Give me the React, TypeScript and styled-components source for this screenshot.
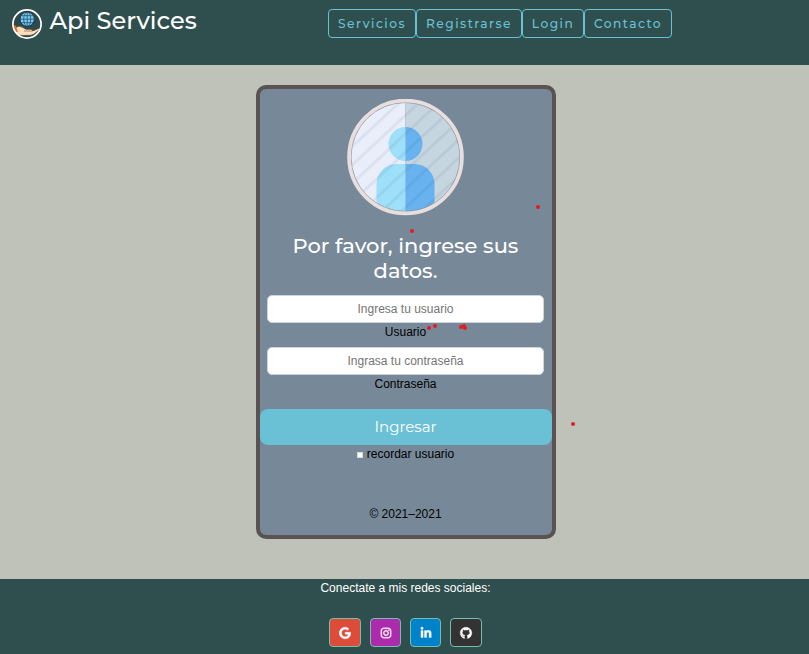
import React from 'react';
import styled, { createGlobalStyle } from 'styled-components';
import { FaGoogle, FaInstagram, FaLinkedinIn, FaGithub } from 'react-icons/fa';

const Global = createGlobalStyle`
  * { box-sizing: border-box; }
  body { margin: 0; background: #bfc2b8; font: 12px/18px "Liberation Sans", Arial, sans-serif; color: #000; }
`;
const display = '"Montserrat", "Inter", sans-serif';

const Page = styled.div`
  display: flex;
  flex-direction: column;
  height: 654px;
  overflow: hidden;
`;
const Header = styled.header`
  display: flex;
  align-items: flex-start;
  height: 65px;
  padding: 9px 0 0 12px;
  background: #2f4f4f;
`;
const Brand = styled.div`
  display: flex;
  width: 316px;
  gap: 7.5px;
`;
const BrandName = styled.span`
  font: 500 24px/24px ${display};
  color: #fff;
`;
const Nav = styled.nav`
  display: flex;
`;
const NavLink = styled.a<{ $width: number }>`
  display: flex;
  justify-content: center;
  width: ${(p) => p.$width}px;
  height: 29px;
  border: 1px solid #6ac1d5;
  border-radius: 4px;
  font: 500 12.2px/27px ${display};
  letter-spacing: 1.5px;
  color: #6ac1d5;
  white-space: nowrap;
`;
const Main = styled.main`
  display: flex;
  justify-content: center;
  align-items: flex-start;
  height: 514px;
  padding: 20px 0 0 3px;
`;
const Card = styled.form`
  position: relative;
  display: flex;
  flex-direction: column;
  align-items: center;
  width: 300px;
  height: 454px;
  padding: 10px 1px 0 0;
  border: 4px solid #5b5353;
  border-radius: 10px;
  background: #778899;
`;
const Title = styled.h1`
  width: 270px;
  margin: 17px 0 12px;
  font: 500 21px/25px ${display};
  text-align: center;
  color: #fff;
`;
const Field = styled.label`
  display: flex;
  flex-direction: column;
  align-items: center;
  height: 52px;
`;
const Input = styled.input`
  width: 277px;
  height: 28px;
  border: 1px solid #ced4da;
  border-radius: 5px;
  background: #fff;
  font: 12px "Liberation Sans", Arial, sans-serif;
  text-align: center;
  &::placeholder { color: #757575; }
`;
const Submit = styled.button`
  align-self: stretch;
  height: 36px;
  margin: 10px -1px 0 0;
  padding: 0 1px 0 0;
  border: 0;
  border-radius: 8px;
  background: #6ac1d5;
  font: 400 15px/36px ${display};
  color: #fff;
`;
const Remember = styled.label`
  display: flex;
  align-items: center;
  gap: 4px;
  height: 18px;
`;
const Check = styled.input`
  appearance: none;
  width: 6px;
  height: 6px;
  margin: 2px 0 0;
  border: 1px solid #d5d8db;
  background: #fff;
`;
const Copyright = styled.p`
  margin: 42px 0 0;
`;
const Dot = styled.i<{ $x: number; $y: number }>`
  position: absolute;
  left: ${(p) => p.$x - 262}px;
  top: ${(p) => p.$y - 91}px;
  width: 4px;
  height: 4px;
  border-radius: 2px;
  background: #e31b23;
`;
const Footer = styled.footer`
  display: flex;
  flex-direction: column;
  align-items: center;
  height: 75px;
  padding-left: 2px;
  background: #2f4f4f;
  color: #fff;
`;
const Socials = styled.div`
  display: flex;
  gap: 9px;
  margin-top: 21px;
`;
const Social = styled.a<{ $color: string; $width: number }>`
  display: flex;
  align-items: center;
  justify-content: center;
  width: ${(p) => p.$width}px;
  height: 29px;
  border: 1px solid #75bfaa;
  border-radius: 4px;
  background: ${(p) => p.$color};
  color: #fff;
  font-size: 12px;
  svg { stroke: #fff; stroke-width: 14px; overflow: visible; }
`;

const Logo = () => (
  <svg width="30" height="30" viewBox="0 0 30 30">
    <defs><clipPath id="logo"><circle cx="15" cy="15" r="14" /></clipPath></defs>
    <circle cx="15" cy="15" r="14" fill="#2f4a4c" />
    <g clipPath="url(#logo)">
      <circle cx="15.2" cy="10.2" r="7.2" fill="#78cbf3" stroke="#173447" />
      <g fill="none" stroke="#24536e" strokeWidth=".8">
        <ellipse cx="15.2" cy="10.2" rx="3.5" ry="7.2" />
        <path d="M15.2 3v14M8 10.2h14.4M9.2 6.7h12M9.2 13.7h12" />
      </g>
      <path d="M4 18q4-1.5 7 .5l3 1.8h5q2 .2 1.5 1.7l6.5-2.8 1 1-6 5q-3 1.7-8 1.2H7L3 23z" fill="#ffdfb6" stroke="#302c2a" strokeWidth=".6" />
      <path d="M12 22h8" stroke="#705344" strokeWidth=".6" />
      <path d="M0 16.5h3.8l2 6.5L2 24z" fill="#e86630" />
    </g>
    <circle cx="15" cy="15" r="14.1" fill="none" stroke="#fff" strokeWidth="1.7" />
  </svg>
);

const Avatar = () => (
  <svg width="117" height="117" viewBox="0.5 0 117 117">
    <defs>
      <clipPath id="avatar"><circle cx="59" cy="58" r="54.5" /></clipPath>
      <pattern id="stripes" width="13.5" height="13.5" patternUnits="userSpaceOnUse" patternTransform="rotate(47 59 58)">
        <rect width="3" height="13.5" fill="#34506a" opacity=".08" />
      </pattern>
    </defs>
    <g clipPath="url(#avatar)">
      <path d="M0 0h59v117H0z" fill="#e9eefa" />
      <path d="M59 0h59v117H59z" fill="#c5d6e1" />
      <path d="M59 28a17 17 0 0 0 0 34zM59 65H50a20 20 0 0 0-20 20v32h29z" fill="#9edff9" />
      <path d="M59 28a17 17 0 0 1 0 34zM59 65h9a20 20 0 0 1 20 20v32H59z" fill="#67b2ef" />
      <rect width="118" height="117" fill="url(#stripes)" />
    </g>
    <circle cx="59" cy="58" r="54.5" fill="none" stroke="#8a8f9a" strokeWidth=".8" />
    <circle cx="59" cy="58" r="56.4" fill="none" stroke="#e9dede" strokeWidth="3.8" />
  </svg>
);

const dots = [[538, 206.5], [411.5, 230.5], [428.5, 328], [434.5, 325.5], [460.5, 326.5], [463.5, 325.5], [465, 327.5], [572.5, 423.5]];

export default function App() {
  return (
    <Page>
      <Global />
      <Header>
        <Brand><Logo /><BrandName>Api Services</BrandName></Brand>
        <Nav>
          <NavLink $width={88}>Servicios</NavLink>
          <NavLink $width={106}>Registrarse</NavLink>
          <NavLink $width={62}>Login</NavLink>
          <NavLink $width={88}>Contacto</NavLink>
        </Nav>
      </Header>
      <Main>
        <Card>
          <Avatar />
          <Title>Por favor, ingrese sus datos.</Title>
          <Field><Input placeholder="Ingresa tu usuario" />Usuario</Field>
          <Field><Input type="password" placeholder="Ingrasa tu contraseña" />Contraseña</Field>
          <Submit type="button">Ingresar</Submit>
          <Remember><Check type="checkbox" />recordar usuario</Remember>
          <Copyright>© 2021–2021</Copyright>
          {dots.map(([x, y]) => <Dot key={`${x}-${y}`} $x={x} $y={y} />)}
        </Card>
      </Main>
      <Footer>
        Conectate a mis redes sociales:
        <Socials>
          <Social $width={32} $color="#dd4b39"><FaGoogle /></Social>
          <Social $width={31} $color="#ac2bac"><FaInstagram /></Social>
          <Social $width={31} $color="#0082ca"><FaLinkedinIn /></Social>
          <Social $width={32} $color="#333333"><FaGithub /></Social>
        </Socials>
      </Footer>
    </Page>
  );
}
